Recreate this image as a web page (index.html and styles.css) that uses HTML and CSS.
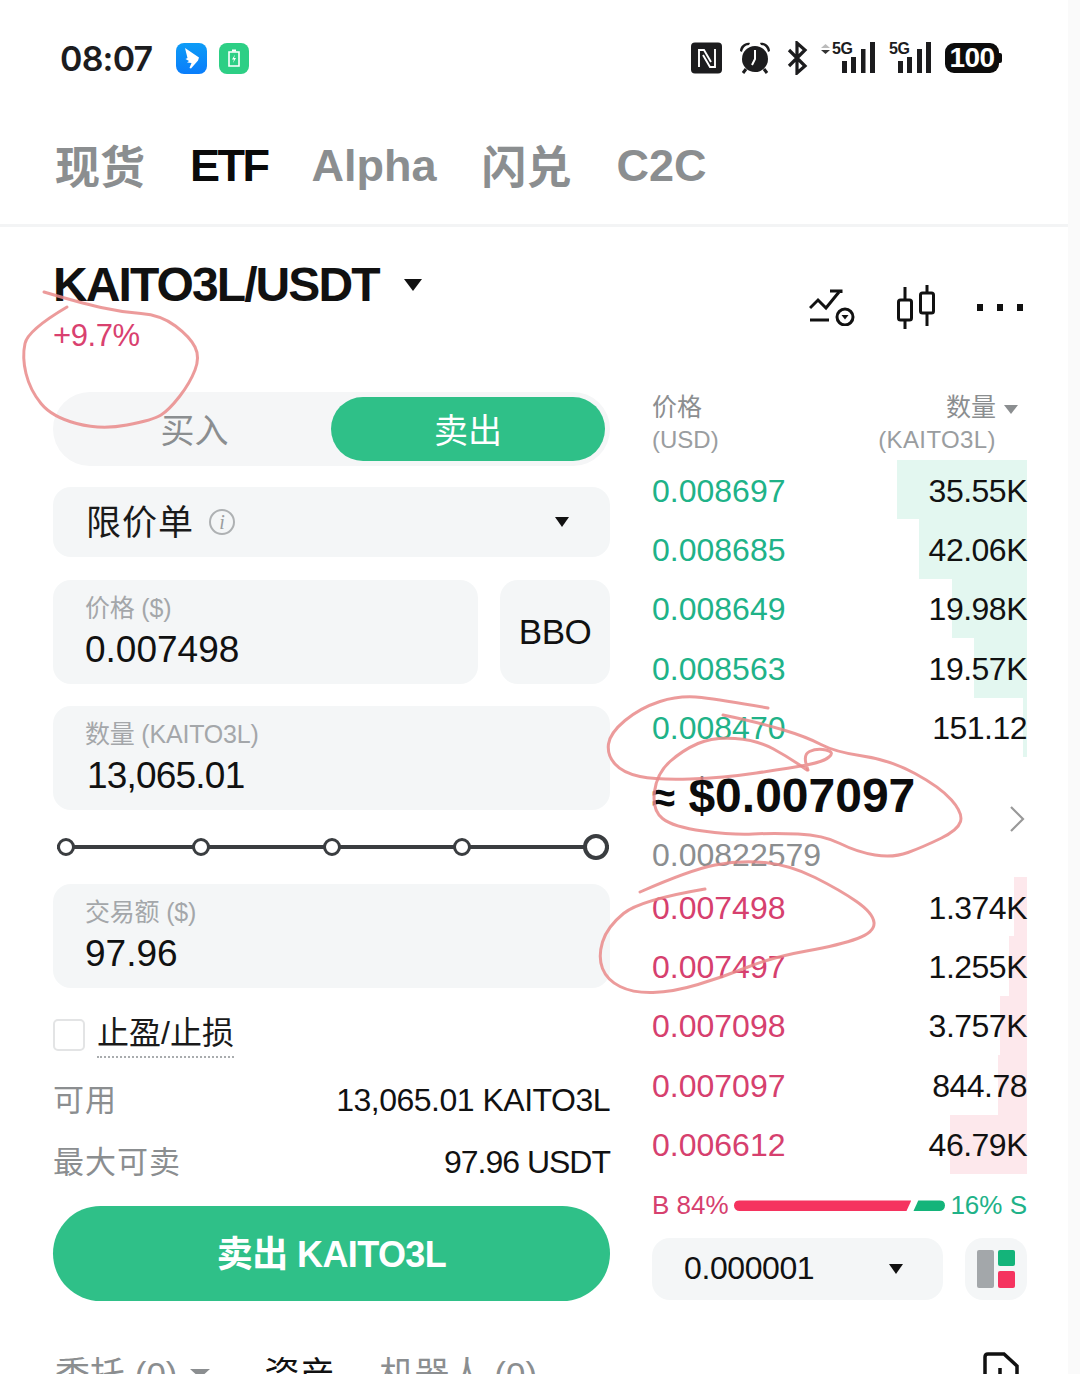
FILE: index.html
```html
<!DOCTYPE html>
<html lang="zh-CN">
<head>
    <meta charset="UTF-8">
    <meta name="viewport" content="width=device-width, initial-scale=1.0">
    <title>KAITO3L/USDT</title>
    <link rel="stylesheet" href="styles.css">
</head>
<body>
    <div class="page">
        <div class="statusbar">
            <div class="status-left">
                <span class="clock">08:07</span>
                <span class="app-icon app-blue">
                    <svg width="31" height="31" viewBox="0 0 31 31"><path d="M9 5l14 9.500-1 3-7 8-1.500-.5 2-5-4.500-.5 2-1.500-3.500-2 2-1z" fill="#fff"/></svg>
                </span>
                <span class="app-icon app-green">
                    <svg width="30" height="30" viewBox="0 0 30 30"><path d="M10 9h10v14H10z" fill="none" stroke="#fff" stroke-width="1.600"/><path d="M13 7.500h4" stroke="#fff" stroke-width="2"/><path d="M16 11.500l-3 5h2l-1 3.500 3-5h-2z" fill="#fff"/></svg>
                </span>
            </div>
            <div class="status-right">
                <svg width="32" height="32" viewBox="0 0 32 32"><rect width="31" height="31" y="0.500" rx="4" fill="#1c1c1e"/><path d="M8 25V8h5l7 12M24 7v18h-5L12 13" fill="none" stroke="#fff" stroke-width="1.900"/></svg>
                <svg width="37" height="34" viewBox="0 0 37 34"><path d="M4 10c0-5 5-9 10-8l-1 2c-4 0-6 3-7 7zM34 10c0-5-5-9-10-8l1 2c4 0 6 3 7 7z" fill="#1c1c1e"/><circle cx="19" cy="18" r="13" fill="#1c1c1e"/><path d="M19 9v9l-3 6" fill="none" stroke="#fff" stroke-width="2"/><path d="M10 28l-3 4M28 28l3 4" stroke="#1c1c1e" stroke-width="3"/></svg>
                <svg width="21" height="34" viewBox="0 0 21 34"><path d="M2 9l16 16-8 7V2l8 7L2 25" fill="none" stroke="#1c1c1e" stroke-width="3.200"/></svg>
                <svg width="54" height="34" viewBox="0 0 54 34">
                    <path d="M0 7l4.500-4 4.500 4z" fill="#bbb"/><path d="M0 9h9l-4.500 4z" fill="#333"/>
                    <text x="11" y="13" class="net-label">5G</text>
                    <path d="M21 20h5v12h-5zM30 16h5v16h-5zM40 8h4.500v24H40zM49 1h5v31h-5z" fill="#1c1c1e"/>
                </svg>
                <svg width="43" height="34" viewBox="0 0 43 34">
                    <text x="0" y="13" class="net-label">5G</text>
                    <path d="M9 20h5v12H9zM18 16h5v16h-5zM28 8h5v24h-5zM37 1h5v31h-5z" fill="#1c1c1e"/>
                </svg>
                <span class="battery">100</span>
            </div>
        </div>

        <nav class="tabs">
            <span class="tab tab-cjk">现货</span>
            <span class="tab tab-active">ETF</span>
            <span class="tab">Alpha</span>
            <span class="tab tab-cjk">闪兑</span>
            <span class="tab">C2C</span>
        </nav>

        <header class="pair">
            <div>
                <div class="pair-name">KAITO3L/USDT<i class="caret caret-lg"></i></div>
                <div class="pair-change">+9.7%</div>
            </div>
            <div class="tools">
                <svg width="46" height="38" viewBox="0 0 46 38" fill="none" stroke="#111" stroke-width="3">
                    <path d="M1 20l8-8 8 8L30 4"/><path d="M21 3h11v2" stroke-width="3"/>
                    <path d="M1 32h19"/><circle cx="36" cy="29" r="8"/>
                    <path d="M32.500 27h7l-3.500 4.500z" fill="#111" stroke="none"/>
                </svg>
                <svg width="40" height="44" viewBox="0 0 40 44" fill="none" stroke="#111" stroke-width="3">
                    <path d="M9 2v13M9 35v9M31 0v8M31 28v13"/>
                    <rect x="2.500" y="15" width="13" height="20" rx="2"/>
                    <rect x="24.500" y="8" width="13" height="20" rx="2"/>
                </svg>
                <div class="dots"><i></i><i></i><i></i></div>
            </div>
        </header>

        <main class="trade">
            <section class="form-col">
                <div class="toggle">
                    <span class="toggle-item">买入</span>
                    <span class="toggle-item toggle-on">卖出</span>
                </div>
                <div class="select order-type">
                    <span class="order-type-name">限价单</span>
                    <span class="info">i</span>
                    <i class="caret caret-sm push-right"></i>
                </div>
                <div class="price-row">
                    <div class="field field-grow">
                        <span class="field-label">价格 ($)</span>
                        <span class="field-value">0.007498</span>
                    </div>
                    <div class="bbo">BBO</div>
                </div>
                <div class="field field-qty">
                    <span class="field-label">数量 (KAITO3L)</span>
                    <span class="field-value field-value-tight">13,065.01</span>
                </div>
                <div class="slider">
                    <i class="knob"></i><i class="knob"></i><i class="knob"></i><i class="knob"></i><i class="knob knob-end"></i>
                </div>
                <div class="field">
                    <span class="field-label">交易额 ($)</span>
                    <span class="field-value">97.96</span>
                </div>
                <div class="tpsl">
                    <i class="checkbox"></i>
                    <span class="tpsl-label">止盈/止损</span>
                </div>
                <div class="info-row">
                    <span class="info-key">可用</span>
                    <span class="info-val">13,065.01 KAITO3L</span>
                </div>
                <div class="info-row">
                    <span class="info-key">最大可卖</span>
                    <span class="info-val info-val-tight">97.96 USDT</span>
                </div>
                <button class="submit">卖出 KAITO3L</button>
            </section>

            <section class="book-col">
                <div class="book-head">
                    <div>
                        <div class="head-title">价格</div>
                        <div class="head-unit">(USD)</div>
                    </div>
                    <div class="head-right">
                        <div class="head-title head-title-qty">数量<i class="caret caret-grey"></i></div>
                        <div class="head-unit head-unit-qty">(KAITO3L)</div>
                    </div>
                </div>

                <div class="row"><i class="depth depth-ask" style="width: 130px"></i><span class="price ask">0.008697</span><span class="qty">35.55K</span></div>
                <div class="row"><i class="depth depth-ask" style="width: 108px"></i><span class="price ask">0.008685</span><span class="qty">42.06K</span></div>
                <div class="row"><i class="depth depth-ask" style="width: 75px"></i><span class="price ask">0.008649</span><span class="qty">19.98K</span></div>
                <div class="row"><i class="depth depth-ask" style="width: 53px"></i><span class="price ask">0.008563</span><span class="qty">19.57K</span></div>
                <div class="row"><i class="depth depth-ask" style="width: 4px"></i><span class="price ask">0.008470</span><span class="qty">151.12</span></div>

                <div class="mid">
                    <div>
                        <div class="mid-price"><span class="approx">≈</span> $0.007097</div>
                        <div class="mid-mark">0.00822579</div>
                    </div>
                    <svg class="mid-arrow" width="16" height="28" viewBox="0 0 16 28"><path d="M2 2l12 12L2 26" fill="none" stroke="#999" stroke-width="2.200"/></svg>
                </div>

                <div class="row"><i class="depth depth-bid" style="width: 13px"></i><span class="price bid">0.007498</span><span class="qty">1.374K</span></div>
                <div class="row"><i class="depth depth-bid" style="width: 18px"></i><span class="price bid">0.007497</span><span class="qty">1.255K</span></div>
                <div class="row"><i class="depth depth-bid" style="width: 27px"></i><span class="price bid">0.007098</span><span class="qty">3.757K</span></div>
                <div class="row"><i class="depth depth-bid" style="width: 29px"></i><span class="price bid">0.007097</span><span class="qty">844.78</span></div>
                <div class="row"><i class="depth depth-bid" style="width: 77px"></i><span class="price bid">0.006612</span><span class="qty">46.79K</span></div>

                <div class="ratio">
                    <span class="bid">B 84%</span>
                    <div class="ratio-bar">
                        <i class="ratio-buy"></i>
                        <i class="ratio-sell"></i>
                    </div>
                    <span class="ratio-s">16% S</span>
                </div>

                <div class="book-controls">
                    <div class="select tick">
                        <span>0.000001</span>
                        <i class="caret caret-sm push-right"></i>
                    </div>
                    <div class="layout-btn">
                        <svg width="38" height="38" viewBox="0 0 38 38">
                            <rect width="17" height="38" rx="2" fill="#a3a7aa"/>
                            <rect x="21" width="17" height="16" rx="2" fill="#14b47a"/>
                            <rect x="21" y="21" width="17" height="17" rx="2" fill="#f5335f"/>
                        </svg>
                    </div>
                </div>
            </section>
        </main>

        <div class="orders">
            <span class="order-tab order-tab-first">委托 (0)<i class="caret caret-orders"></i></span>
            <span class="order-tab order-tab-on">资产</span>
            <span class="order-tab">机器人 (0)</span>
            <svg class="doc-icon" width="36" height="40" viewBox="0 0 36 40"><path d="M2 38V5q0-3 3-3h16l13 12v24M17 16v12" fill="none" stroke="#111" stroke-width="3.500"/></svg>
        </div>

        <!-- hand drawn marks on top of the screenshot -->
        <svg class="scribbles" width="1080" height="1374" viewBox="0 0 1080 1374">
            <path d="M44 292Q81 303 101 307.500Q121 312 141 313.500Q161 315 175.500 326Q190 337 195 347Q200 357 195 370Q190 383 179.500 396.500Q169 410 161 415Q153 420 127 425Q101 430 76.500 423.500Q52 417 41 403.500Q30 390 26 373.500Q22 357 25 343.500Q28 330 67 307"/>
            <path d="M768 708Q723 700 701.500 697.500Q680 695 660 701.500Q640 708 625 720.500Q610 733 608.500 744Q607 755 615 764Q623 773 640 776.500Q657 780 690 779Q723 778 756.500 773Q790 768 806.500 765Q823 762 829 757Q835 752 826 750Q817 748 809.500 751.500Q802 755 808 770"/>
            <path d="M723 715Q757 722 782 729.500Q807 737 821 744.500Q835 752 862.500 756Q890 760 915 773.500Q940 787 951.500 800Q963 813 960.500 821.500Q958 830 940.500 838.500Q923 847 908 852.500Q893 858 875 855Q857 852 840 843.500Q823 835 798 834Q773 833 753 834Q733 835 703 831Q673 827 662.500 818.500Q652 810 654.500 791.500Q657 773 670 761.500Q683 750 698 743.500Q713 737 735 738.500Q757 740 773.500 749Q790 758 807 770"/>
            <path d="M640 892Q690 870 715 865Q740 860 765 862.500Q790 865 815 877.500Q840 890 856.500 901.500Q873 913 874 922.500Q875 932 857.500 938.500Q840 945 806.500 951Q773 957 748 967Q723 977 698 984.500Q673 992 653 992.500Q633 993 620 986.500Q607 980 602.500 968.500Q598 957 602.500 942Q607 927 623.500 913.500Q640 900 705 889"/>
        </svg>
    </div>
</body>
</html>
```

FILE: styles.css
```css
body {
    margin: 0;
    background-color: #fff;
    font-family: "Liberation Sans", "Noto Sans CJK SC", sans-serif;
    color: #111;
}
i { font-style: normal; }
svg { display: block; flex-shrink: 0; }

.page {
    position: relative;
    width: 1080px;
    height: 1374px;
    overflow: hidden;
    box-sizing: border-box;
    border-right: 12px solid #fafafa;
}

/* --- Status bar --- */
.statusbar {
    display: flex;
    align-items: center;
    justify-content: space-between;
    width: 1080px;
    height: 116px;
    box-sizing: border-box;
    padding: 0 78px 0 60px;
}
.status-left { display: flex; align-items: center; }
.clock {
    font-family: Inter, "Liberation Sans", sans-serif;
    font-size: 34px;
    font-weight: 600;
    color: #1c1c1e;
    margin-right: 24px;
    letter-spacing: -0.800px;
}
.app-icon { display: block; width: 31px; height: 31px; border-radius: 8px; }
.app-blue { background: linear-gradient(#0d9cf6, #0a7dfb); margin-right: 12px; }
.app-green { background-color: #2dcf85; width: 30px; }
.status-right { display: flex; align-items: center; gap: 13.5px; }
.net-label { font-family: "Liberation Sans", sans-serif; font-size: 16px; font-weight: bold; fill: #1c1c1e; letter-spacing: -0.500px; }
.battery {
    position: relative;
    width: 54px;
    height: 30px;
    margin-right: 3px;
    border-radius: 9px;
    background-color: #0c0c0c;
    color: #fff;
    font-size: 28px;
    font-weight: bold;
    line-height: 30px;
    text-align: center;
    letter-spacing: -0.500px;
}
.battery::after {
    content: "";
    position: absolute;
    top: 10px;
    right: -3px;
    width: 3px;
    height: 10px;
    border-radius: 0 2px 2px 0;
    background-color: #0c0c0c;
}

/* --- Top tabs --- */
.tabs {
    display: flex;
    gap: 45px;
    width: 1080px;
    height: 111px;
    box-sizing: border-box;
    padding: 26px 0 0 55px;
    border-bottom: 3px solid #f3f4f5;
}
.tab { font-size: 45px; font-weight: bold; line-height: 48px; color: #8b8e90; }
.tab-cjk { padding-top: 3px; }
.tab-active { color: #0a0a0a; letter-spacing: -2.500px; margin-right: -1px; }

/* --- Pair header --- */
.pair {
    display: flex;
    justify-content: space-between;
    align-items: flex-start;
    width: 1080px;
    height: 165px;
    box-sizing: border-box;
    padding: 34px 57px 0 53px;
}
.pair-name {
    display: flex;
    align-items: center;
    font-size: 48px;
    font-weight: bold;
    line-height: 48px;
    letter-spacing: -1.900px;
}
.pair-change { margin-top: 7px; font-size: 31px; line-height: 40px; color: #d9416f; letter-spacing: -0.400px; }
.tools { display: flex; align-items: center; gap: 41px; margin-top: 24px; }
.dots { display: flex; gap: 14px; }
.dots i { width: 6px; height: 7px; background-color: #111; }

.caret {
    display: inline-block;
    width: 0;
    height: 0;
    border-style: solid;
    border-color: #111 transparent transparent;
}
.caret-lg { border-width: 12px 9px 0; margin-left: 25px; }
.caret-sm { border-width: 10px 7px 0; }
.caret-grey { border-width: 9px 7px 0; border-top-color: #8b8e90; margin-left: 8px; vertical-align: middle; }
.caret-orders { border-width: 9px 10px 0; border-top-color: #8b8e90; margin-left: 12px; vertical-align: 9px; }
.push-right { margin-left: auto; }

/* --- Layout --- */
.trade { display: flex; gap: 42px; padding: 0 53px; width: 1080px; box-sizing: border-box; }
.form-col { width: 557px; flex-shrink: 0; }
.book-col { width: 375px; flex-shrink: 0; }

/* --- Order form --- */
.toggle {
    display: flex;
    align-items: center;
    height: 74px;
    box-sizing: border-box;
    padding: 0 5px;
    border-radius: 37px;
    background-color: #f5f6f7;
}
.toggle-item { flex: 1; height: 64px; box-sizing: border-box; padding-top: 2px; font-size: 34px; line-height: 64px; text-align: center; color: #8b8e90; }
.toggle-on { flex: 0 0 274px; border-radius: 32px; background-color: #2fc088; color: #fff; }
.select {
    display: flex;
    align-items: center;
    border-radius: 18px;
    background-color: #f4f6f7;
}
.order-type { height: 70px; margin-top: 21px; padding: 0 41px 0 33px; }
.order-type-name { margin-bottom: 6px; font-size: 35px; letter-spacing: 1px; color: #1a1a1a; }
.info {
    width: 22px;
    height: 22px;
    margin-left: 15px;
    border: 2px solid #aeb1b3;
    border-radius: 50%;
    font-family: "Liberation Serif", serif;
    font-style: italic;
    font-size: 20px;
    line-height: 22px;
    text-align: center;
    color: #9a9da0;
}
.price-row { display: flex; gap: 22px; margin-top: 23px; }
.field {
    display: flex;
    flex-direction: column;
    height: 104px;
    box-sizing: border-box;
    padding: 14px 32px 0;
    border-radius: 18px;
    background-color: #f4f6f7;
}
.field-grow { flex: 1; }
.field-qty { margin-top: 22px; }
.field-label { font-size: 25px; line-height: 29px; color: #a4a7aa; letter-spacing: -0.200px; }
.field-value { margin-top: 6px; font-size: 37px; line-height: 42px; color: #111; }
.field-value-tight { letter-spacing: -0.800px; margin-left: 2px; }
.bbo {
    width: 110px;
    height: 104px;
    border-radius: 18px;
    background-color: #f4f6f7;
    font-size: 35px;
    line-height: 104px;
    text-align: center;
    letter-spacing: -0.500px;
}
.slider {
    display: flex;
    align-items: center;
    justify-content: space-between;
    height: 74px;
    margin: 0 1px 0 4px;
    background: linear-gradient(#3a3d40, #3a3d40) center / 100% 4px no-repeat;
}
.knob {
    width: 18px;
    height: 18px;
    box-sizing: border-box;
    border: 3px solid #3a3d40;
    border-radius: 50%;
    background-color: #fff;
}
.knob:nth-child(2) { margin-left: 5px; }
.knob-end { width: 26px; height: 26px; border-width: 4px; }
.tpsl { display: flex; align-items: flex-start; height: 42px; margin-top: 28px; }
.checkbox {
    width: 32px;
    height: 32px;
    margin-top: 3px;
    box-sizing: border-box;
    border: 2px solid #e3e4e5;
    border-radius: 5px;
}
.tpsl-label {
    margin-left: 12px;
    height: 42px;
    font-size: 32px;
    line-height: 34px;
    color: #1a1a1a;
    border-bottom: 2px dotted #a9acae;
    box-sizing: border-box;
}
.info-row {
    display: flex;
    justify-content: space-between;
    align-items: center;
    height: 62px;
}
.tpsl + .info-row { margin-top: 11px; }
.info-key { margin-bottom: 5px; font-size: 31px; color: #8b8e90; letter-spacing: 1px; }
.info-val { font-size: 32px; letter-spacing: -0.500px; color: #111; }
.info-val-tight { letter-spacing: -1px; }
.submit {
    display: block;
    width: 100%;
    height: 95px;
    margin-top: 13px;
    padding: 0 0 6px;
    border: none;
    border-radius: 48px;
    background-color: #2fc088;
    color: #fff;
    font-family: inherit;
    font-size: 36px;
    font-weight: bold;
    letter-spacing: -0.600px;
}

/* --- Order book --- */
.book-head {
    display: flex;
    justify-content: space-between;
    height: 68px;
    color: #8b8e90;
}
.head-right { text-align: right; }
.head-title { font-size: 25px; line-height: 30px; }
.head-title-qty { margin-right: 9px; }
.head-unit { margin-top: 2px; font-size: 24px; line-height: 32px; color: #9a9da0; }
.head-unit-qty { margin-right: 31px; letter-spacing: 0.400px; }
.row {
    position: relative;
    display: flex;
    justify-content: space-between;
    align-items: center;
    height: 59.400px;
    box-sizing: border-box;
    padding-top: 3px;
    font-size: 32px;
}
.row span { position: relative; }
.depth { position: absolute; top: 0; right: 0; bottom: 0; }
.depth-ask { background-color: #e3f7f0; }
.depth-bid { background-color: #fde8ec; }
.ask { color: #20b288; }
.bid { color: #d6406e; }
.qty { color: #111; letter-spacing: -0.500px; }
.mid {
    display: flex;
    justify-content: space-between;
    align-items: center;
    height: 120px;
    box-sizing: border-box;
    padding: 10px 2px 0 0;
}
.mid-price { font-size: 48px; font-weight: bold; line-height: 56px; color: #0c0c0c; }
.approx { font-size: 42px; }
.mid-mark { margin-top: 9px; font-size: 32px; line-height: 40px; color: #8b8e90; }
.mid-arrow { margin-top: -6px; }
.ratio {
    display: flex;
    align-items: center;
    height: 40px;
    margin-top: 12px;
    font-size: 26px;
}
.ratio-s { color: #20b288; }
.ratio-bar { display: flex; flex: 1; gap: 2px; margin: 0 5px; }
.ratio-bar i { display: block; height: 11px; }
.ratio-buy {
    flex: 177;
    border-radius: 6px 0 0 6px;
    background-color: #f5335f;
    clip-path: polygon(0 0, 100% 0, calc(100% - 5px) 100%, 0 100%);
}
.ratio-sell {
    flex: 32;
    border-radius: 0 6px 6px 0;
    background-color: #14b47a;
    clip-path: polygon(5px 0, 100% 0, 100% 100%, 0 100%);
}
.book-controls { display: flex; justify-content: space-between; margin-top: 12px; }
.tick { width: 291px; height: 62px; box-sizing: border-box; padding: 0 40px 0 32px; font-size: 32px; letter-spacing: -0.400px; }
.layout-btn {
    display: flex;
    align-items: center;
    justify-content: center;
    width: 62px;
    height: 62px;
    border-radius: 18px;
    background-color: #f4f6f7;
}

/* --- Orders tabs, cut by the screen edge --- */
.orders {
    display: flex;
    align-items: flex-start;
    width: 1080px;
    box-sizing: border-box;
    padding: 51px 61px 0 55px;
}
.order-tab { font-size: 35px; line-height: 46px; color: #8b8e90; margin-right: 45px; }
.order-tab-first { margin-right: 55px; }
.order-tab-on { color: #111; }
.doc-icon { margin-left: auto; }

/* --- Red pen marks --- */
.scribbles { position: absolute; top: 0; left: 0; }
.scribbles path { fill: none; stroke: #e98a8a; stroke-width: 3; stroke-linecap: round; opacity: 0.85; }
```
